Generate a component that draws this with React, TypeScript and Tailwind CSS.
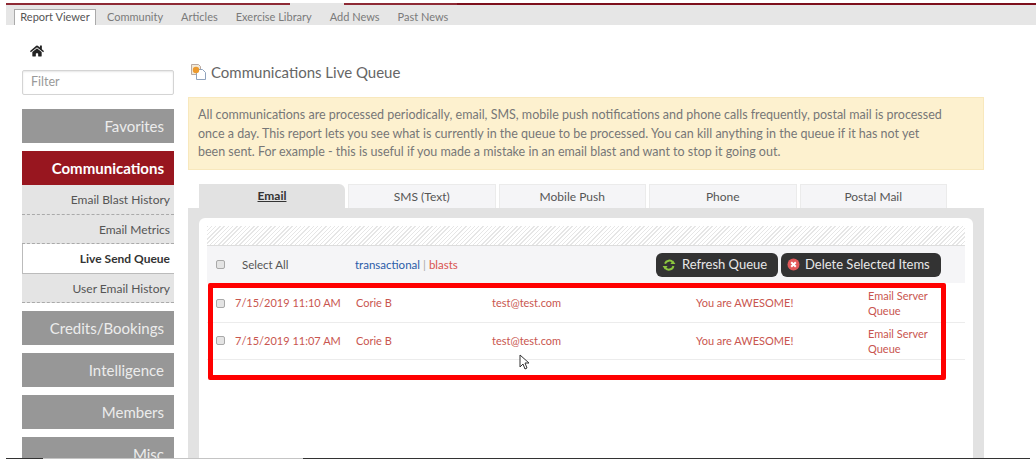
import { FaHome } from "react-icons/fa";

const topTabs = ["Community", "Articles", "Exercise Library", "Add News", "Past News"];
const queueTabs = ["SMS (Text)", "Mobile Push", "Phone", "Postal Mail"];
const subItems = [
  { label: "Email Blast History" },
  { label: "Email Metrics" },
  { label: "Live Send Queue", active: true },
  { label: "User Email History" },
];
const rows = [{ date: "7/15/2019 11:10 AM" }, { date: "7/15/2019 11:07 AM" }];

function SideButton({ label }: { label: string }) {
  return (
    <div className="h-[34px] shrink-0 bg-[#979797] pr-[10px] text-right text-[15px] leading-[35px] text-[#ececec]">
      {label}
    </div>
  );
}

function Checkbox() {
  return <span className="block h-[9px] w-[9px] rounded-[2px] border border-[#a9a9a9] bg-[#e4e4e4]" />;
}

function RefreshIcon() {
  return (
    <svg width="14" height="14" viewBox="0 0 14 14" fill="none" className="shrink-0">
      <path d="M3 9.5A4.6 4.6 0 0 0 11.4 8" stroke="#8cc63f" strokeWidth="2" />
      <path d="M11 4.5A4.6 4.6 0 0 0 3 5.6" stroke="#8cc63f" strokeWidth="2" />
      <path d="M8.4 6h5L11 2.6zM5.600 8h-5L3 11.400z" fill="#8cc63f" />
    </svg>
  );
}

function DeleteIcon() {
  return (
    <svg width="13" height="13" viewBox="0 0 13 13" className="shrink-0">
      <circle cx="6.500" cy="6.500" r="6" fill="#e2595a" />
      <path d="M4.200 4.200l4.600 4.600M8.800 4.200l-4.600 4.600" stroke="#fff" strokeWidth="2" />
    </svg>
  );
}

function DocIcon() {
  return (
    <svg width="18" height="18" viewBox="0 0 18 18" className="shrink-0">
      <path d="M1.500 1.500h7l2 2v8h-9z" fill="#f3ead9" stroke="#b9a9a0" />
      <path d="M6.500 6.500h6l3 3v7h-9z" fill="#fff" stroke="#8fa3bd" />
      <circle cx="6" cy="7" r="3.200" fill="#ec9a2e" />
    </svg>
  );
}

export default function App() {
  return (
    <div className="flex h-[464px] w-[1036px] flex-col overflow-hidden bg-white font-['Lato','Open_Sans',sans-serif]">
      <div className="h-[458px] shrink-0 overflow-hidden">
        {/* Top red strip */}
        <div className="mt-[3px] flex h-[2px] pl-[6px]">
          <div className="w-[284px] bg-[#8e2a35]" />
          <div className="w-[54px] bg-[#e6e6e6]" />
          <div className="w-[113px] bg-[#8e2a35]" />
          <div className="flex-1 bg-[#7d0f1c]" />
        </div>

        {/* Tab bar */}
        <div className="ml-[6px] flex h-5 items-end gap-[18px] bg-[#e6e6e6] pl-2">
          <div className="-mr-[7px] flex h-4 w-[82px] items-center justify-center border border-b-0 border-[#aaa] bg-white text-[11px] text-[#555]">
            Report Viewer
          </div>
          {topTabs.map((tab) => (
            <div key={tab} className="flex h-4 items-center text-[11px] text-[#7a7a7a]">
              {tab}
            </div>
          ))}
        </div>

        <div className="flex">
          {/* Sidebar */}
          <aside className="ml-[22px] flex w-[152px] shrink-0 flex-col">
            <FaHome className="ml-[8px] mt-[19px] text-[14px] text-[#222]" />
            <div className="mt-[12px] flex h-[25px] items-center rounded-[2px] border border-[#d4d4d4] pl-2 text-[12.500px] text-[#999] shadow-[inset_0_1px_2px_rgba(0,0,0,0.1)]">
              Filter
            </div>
            <div className="mt-[14px] flex flex-col gap-2">
              <SideButton label="Favorites" />
              <div>
                <div className="h-[34px] bg-[#98161f] pr-[10px] text-right text-[15px] font-bold leading-[35px] text-white">
                  Communications
                </div>
                {subItems.map((item) => (
                  <div
                    key={item.label}
                    className={
                      item.active
                        ? "h-[29.500px] border-b border-l border-[#bbb] bg-white pr-[4px] text-right text-[12px] font-bold leading-[29px] text-[#333]"
                        : "h-[29.500px] border-b border-dashed border-[#aaa] bg-[#e4e4e4] pr-[4px] text-right text-[12px] leading-[29px] text-[#555]"
                    }
                  >
                    {item.label}
                  </div>
                ))}
              </div>
              <SideButton label="Credits/Bookings" />
              <SideButton label="Intelligence" />
              <SideButton label="Members" />
              <SideButton label="Misc" />
            </div>
          </aside>

          {/* Main */}
          <main className="ml-[14px] w-[796px] shrink-0">
            <div className="ml-[2px] mt-[37px] flex h-[20px] items-center gap-[3px]">
              <DocIcon />
              <h1 className="text-[15px] text-[#666]">Communications Live Queue</h1>
            </div>

            <div className="mt-[15px] h-[73px] whitespace-nowrap border border-[#f8e8bd] bg-[#fdf1cf] pl-[9px] pt-[8px] text-[12.500px] leading-[18.500px] text-[#777]">
              All communications are processed periodically, email, SMS, mobile push notifications and phone calls frequently, postal mail is processed
              <br />
              once a day. This report lets you see what is currently in the queue to be processed. You can kill anything in the queue if it has not yet
              <br />
              been sent. For example - this is useful if you made a mistake in an email blast and want to stop it going out.
            </div>

            {/* Queue tabs */}
            <div className="ml-[11px] mt-[14px] flex h-6 gap-[3px]">
              <div className="flex w-[146px] items-center justify-center rounded-tr-[6px] bg-[#e2e2e2] text-[12px] font-bold text-[#333] underline">
                Email
              </div>
              {queueTabs.map((tab) => (
                <div
                  key={tab}
                  className="flex w-[147.500px] items-center justify-center border border-b-0 border-[#ebebeb] bg-[#f5f5f7] text-[12px] text-[#555]"
                >
                  {tab}
                </div>
              ))}
            </div>

            <div className="h-[260px] bg-[#e2e2e2] px-[11px] pt-[10px]">
              <div className="relative h-[250px] rounded-t-[6px] bg-white px-2 pt-2">
                <div className="h-[20px] border-b border-[#ddd] bg-[repeating-linear-gradient(135deg,#e6e6e6_0,#e6e6e6_1px,#ffffff_1px,#ffffff_3px)]" />

                <div className="flex h-[37px] items-center bg-[#f5f5f7] pl-[9px] text-[11.500px]">
                  <Checkbox />
                  <span className="ml-[17px] w-[113px] text-[#555]">Select All</span>
                  <span className="text-[#2a5ca8]">transactional</span>
                  <span className="mx-[3px] text-[#aaa]">|</span>
                  <span className="text-[#d9534f]">blasts</span>
                  <div className="ml-auto mr-[24px] flex gap-[3px]">
                    <div className="flex h-6 w-[122px] items-center gap-[6px] rounded-[6px] bg-[#333] pl-[6px] text-[13px] text-[#e8e8e8]">
                      <RefreshIcon />
                      Refresh Queue
                    </div>
                    <div className="flex h-6 w-[160px] items-center gap-[5px] rounded-[6px] bg-[#333] pl-[6px] text-[13px] text-[#e8e8e8]">
                      <DeleteIcon />
                      Delete Selected Items
                    </div>
                  </div>
                </div>

                <div className="pt-[2px]">
                  {rows.map((row) => (
                    <div
                      key={row.date}
                      className="grid h-[37.500px] grid-cols-[28px_121px_136px_204px_172px_1fr] items-center border-b border-[#ececec] text-[11px] text-[#c9564f]"
                    >
                      <div className="pl-[9px]">
                        <Checkbox />
                      </div>
                      <div>{row.date}</div>
                      <div>Corie B</div>
                      <div>test@test.com</div>
                      <div>You are AWESOME!</div>
                      <div className="w-[70px] leading-[15px]">Email Server Queue</div>
                    </div>
                  ))}
                </div>

                {/* Highlight box and pointer drawn over the table */}
                <div className="absolute left-[9px] top-[65px] h-[97px] w-[738px] rounded-[2px] border-[5px] border-[#f00]" />
                <svg width="11" height="16" viewBox="0 0 11 16" className="absolute left-[320px] top-[136px]">
                  <path d="M1 1v12l3-3 2 5 2-1-2-5h4z" fill="#fff" stroke="#333" strokeWidth="1" />
                </svg>
              </div>
            </div>
          </main>
        </div>
      </div>

      {/* Bottom edge line */}
      <div className="flex h-px shrink-0 pl-[6px] pr-[6px]">
        <div className="w-[37px] bg-[#333]" />
        <div className="w-[260px] bg-[#c4c4c4]" />
        <div className="flex-1 bg-[#333]" />
      </div>
    </div>
  );
}
